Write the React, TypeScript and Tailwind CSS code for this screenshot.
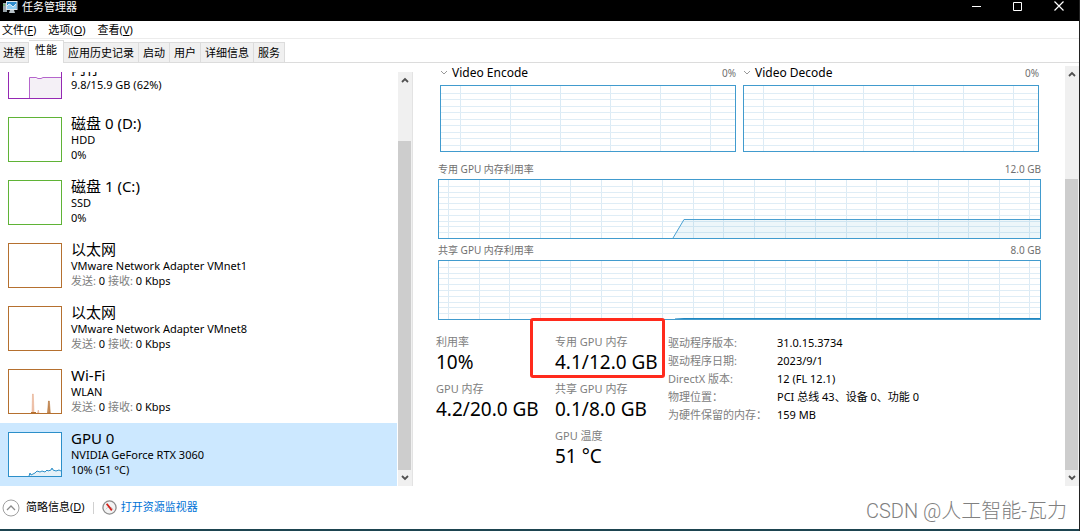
import type { ReactNode } from "react";
import clsx from "clsx";

type Device = {
  name: string;
  detail?: string;
  status: ReactNode;
  border: string;
  chart?: ReactNode;
  selected?: boolean;
};

const menus = [
  { label: "文件", key: "F" },
  { label: "选项", key: "O" },
  { label: "查看", key: "V" },
];

const tabs = ["应用历史记录", "启动", "用户", "详细信息", "服务"];

const idle = (
  <>
    <span className="text-[#808080]">发送:</span> 0 <span className="text-[#808080]">接收:</span> 0 Kbps
  </>
);

const devices: Device[] = [
  {
    name: "内存",
    status: "9.8/15.9 GB (62%)",
    border: "border-[#9528b4]",
    chart: (
      <>
        <path d="M20 43V23h5l2 1h3l2-1h20v20z" fill="#f4f0f6" />
        <path d="M20.500 43V22.500H27l2 1h3l2-1h18" fill="none" stroke="#b565cc" />
      </>
    ),
  },
  { name: "磁盘 0 (D:)", detail: "HDD", status: "0%", border: "border-[#5fb336]" },
  { name: "磁盘 1 (C:)", detail: "SSD", status: "0%", border: "border-[#5fb336]" },
  { name: "以太网", detail: "VMware Network Adapter VMnet1", status: idle, border: "border-[#b5702f]" },
  { name: "以太网", detail: "VMware Network Adapter VMnet8", status: idle, border: "border-[#b5702f]" },
  {
    name: "Wi-Fi",
    detail: "WLAN",
    status: idle,
    border: "border-[#b5702f]",
    chart: (
      <>
        <path d="M23 43l.5-19h.8l.7 19zM28.500 43l.8-3 .7 3z" fill="#f0c4ac" stroke="#e3a583" strokeWidth="0.5" />
        <path d="M38.500 43l1-12h.8l1 12z" fill="#c98f5d" stroke="#a8601f" strokeWidth="0.5" />
        <path d="M22 42.500h5" stroke="#b5702f" />
      </>
    ),
  },
  {
    name: "GPU 0",
    detail: "NVIDIA GeForce RTX 3060",
    status: "10% (51 °C)",
    border: "border-[#2c8fc9]",
    selected: true,
    chart: (
      <>
        <path d="M20 43l1-3 1 2 2-1 2-1 2-2 3 1 2-1 3 1 2-2 1 1 3-1 1-2 1 2 3 1 3-1 2 1v5z" fill="#e5f1f8" />
        <path d="M20 43l1-3 1 2 2-1 2-1 2-2 3 1 2-1 3 1 2-2 1 1 3-1 1-2 1 2 3 1 3-1 2 1" fill="none" stroke="#2c8fc9" />
      </>
    ),
  },
];

const driverInfo = [
  ["驱动程序版本:", "31.0.15.3734"],
  ["驱动程序日期:", "2023/9/1"],
  ["DirectX 版本:", "12 (FL 12.1)"],
  ["物理位置：", "PCI 总线 43、设备 0、功能 0"],
  ["为硬件保留的内存：", "159 MB"],
];

function AppIcon() {
  return (
    <svg viewBox="0 0 16 14" className="h-3.5 w-4" aria-hidden="true">
      <rect x="1" y="3" width="4" height="9" fill="#9aa5ab" />
      <rect x="1.500" y="4" width="1" height="2" fill="#4dc247" />
      <rect x="4" y="1" width="11.500" height="9" fill="#dfe6ea" />
      <rect x="5" y="2" width="9.500" height="7" fill="#2f8ccc" />
      <path d="M5 6l2-2 2 1 2 2 3-3v5H5z" fill="#8fcdf2" />
      <path d="M5 6l2-2 2 1 2 2 3-3" fill="none" stroke="#fff" strokeWidth="0.8" />
      <path d="M8 10h4l1 3H7z" fill="#b9c3c9" />
    </svg>
  );
}

function ScrollArrow({ up = false }: { up?: boolean }) {
  return (
    <button aria-label={up ? "向上滚动" : "向下滚动"} className="flex h-4 shrink-0 items-center justify-center bg-[#f0f0f0]">
      <svg viewBox="0 0 8 6" className="h-1.5 w-2">
        <path d={up ? "M1 5l3-3 3 3" : "M1 1l3 3 3-3"} fill="none" stroke="#505050" strokeWidth="1.800" />
      </svg>
    </button>
  );
}

function ScrollBar({ thumb }: { thumb: string }) {
  return (
    <div className="flex w-3.5 shrink-0 flex-col bg-[#f0f0f0]">
      <ScrollArrow up />
      <div className="flex flex-1 flex-col justify-end">
        <div className={clsx("mr-px bg-[#cdcdcd]", thumb)} />
      </div>
      <ScrollArrow />
    </div>
  );
}

function DeviceRow({ device }: { device: Device }) {
  return (
    <button
      className={clsx(
        "flex h-[63px] w-full shrink-0 gap-[9px] pl-2 text-left",
        device.selected && "bg-[#cce8ff]"
      )}
    >
      <span className={clsx("mt-[9px] h-[45px] w-[54px] shrink-0 border bg-white", device.border)}>
        <svg viewBox="0 0 52 43" className="h-full w-full">
          {device.chart}
        </svg>
      </span>
      <span className="flex h-[60px] flex-col justify-center text-[11px] leading-[15px]">
        <span className="text-[15px] leading-[18px]">{device.name}</span>
        {device.detail && <span>{device.detail}</span>}
        <span>{device.status}</span>
      </span>
    </button>
  );
}

type GraphProps = {
  width: number;
  height: number;
  step: number;
  start: number;
  className: string;
  children?: ReactNode;
};

function Graph({ width, height, step, start, className, children }: GraphProps) {
  const columns = Array.from({ length: Math.ceil((width - start) / step) }, (_, i) => Math.round(start + i * step));
  const rows = Array.from({ length: 9 }, (_, i) => Math.round(((i + 1) * height) / 10));
  return (
    <div className={clsx("border border-[#419bce]", className)}>
      <svg viewBox={`0 0 ${width} ${height}`} preserveAspectRatio="none" className="block h-full w-full">
        {columns.map((x) => (
          <path key={x} d={`M${x + 0.5} 0V${height}`} stroke="#dcebf5" />
        ))}
        {rows.map((y) => (
          <path key={y} d={`M0 ${y + 0.5}H${width}`} stroke="#dfedf6" />
        ))}
        {children}
      </svg>
    </div>
  );
}

function Engine({ name }: { name: string }) {
  return (
    <div>
      <div className="mb-1 flex items-center justify-between leading-4">
        <button className="flex items-center gap-1 text-xs leading-4">
          <svg viewBox="0 0 8 6" className="h-1.5 w-2">
            <path d="M1 1l3 3 3-3" fill="none" stroke="#999" />
          </svg>
          {name}
        </button>
        <span className="text-[10px] text-[#707070]">0%</span>
      </div>
      <Graph width={294} height={65} step={50} start={19} className="h-[67px]" />
    </div>
  );
}

function GraphLabel({ title, max }: { title: string; max: string }) {
  return (
    <div className="mb-0.5 flex justify-between text-[10px] leading-4 text-[#707070]">
      <span>{title}</span>
      <span>{max}</span>
    </div>
  );
}

function Stat({ label, value, marked = false }: { label: string; value: string; marked?: boolean }) {
  return (
    <div className="relative whitespace-nowrap">
      <div className="text-[11px] leading-4 text-[#808080]">{label}</div>
      <div className="text-[19px] leading-6">{value}</div>
      {marked && (
        <div className="absolute -left-[25px] -top-4 h-[60px] w-[135px] rounded-[3px] border-[3px] border-[#ff2a1c]" />
      )}
    </div>
  );
}

export default function App() {
  return (
    <div className="relative flex h-screen flex-col overflow-hidden border-r border-[#222] bg-white font-['Noto_Sans','Noto_Sans_CJK_SC',sans-serif] text-[11px] text-black">
      <header className="flex h-[21px] shrink-0 items-start justify-between bg-black text-white">
        <div className="flex items-center gap-1 pl-0.5">
          <AppIcon />
          <h1 className="leading-[14px]">任务管理器</h1>
        </div>
        <div className="flex gap-[31px] pr-[15px] pt-px">
          <button aria-label="最小化">
            <svg viewBox="0 0 10 10" className="size-2.5">
              <path d="M0 5.500h9" stroke="#fff" />
            </svg>
          </button>
          <button aria-label="最大化">
            <svg viewBox="0 0 10 10" className="size-2.5">
              <path d="M.5 1.500h8v8h-8z" fill="none" stroke="#fff" />
            </svg>
          </button>
          <button aria-label="关闭">
            <svg viewBox="0 0 10 10" className="size-2.5">
              <path d="M.5 .5l9 9M9.500 .5l-9 9" stroke="#fff" strokeWidth="1.200" />
            </svg>
          </button>
        </div>
      </header>

      <nav className="flex h-[18px] shrink-0 gap-3 border-b border-[#ececec] pl-0.5 leading-4">
        {menus.map((menu) => (
          <button key={menu.key}>
            {menu.label}(<span className="underline">{menu.key}</span>)
          </button>
        ))}
      </nav>

      <div role="tablist" className="flex h-6 shrink-0 items-end border-b border-[#dcdcdc] leading-4">
        <button role="tab" className="h-5 border-r border-t border-[#dcdcdc] bg-[#f0f0f0] px-[3px]">
          进程
        </button>
        <button role="tab" aria-selected="true" className="-mb-px h-[23px] border-r border-t border-[#dcdcdc] bg-white px-1.5 pb-1">
          性能
        </button>
        {tabs.map((tab) => (
          <button key={tab} role="tab" className="h-5 border-r border-t border-[#dcdcdc] bg-[#f0f0f0] px-1">
            {tab}
          </button>
        ))}
      </div>

      <main className="flex min-h-0 flex-1">
        <aside className="mt-[9px] flex w-[413px] shrink-0 border-r border-[#e3e3e3]">
          <div className="mr-px flex flex-1 flex-col justify-end overflow-hidden">
            {devices.map((device, i) => (
              <DeviceRow key={i} device={device} />
            ))}
          </div>
          <ScrollBar thumb="h-[86%]" />
        </aside>

        <section className="min-w-0 flex-1 pl-[23px] pr-6 pt-0.5">
          <div className="mb-[9px] grid grid-cols-2 gap-[7px] pl-1 pr-0.5">
            <Engine name="Video Encode" />
            <Engine name="Video Decode" />
          </div>

          <div className="pl-0.5">
            <GraphLabel title="专用 GPU 内存利用率" max="12.0 GB" />
            <Graph width={601} height={58} step={30.6} start={9} className="mb-[3px] h-[60px]">
              <path d="M234 58l11-19h356v19z" fill="#1f86c0" fillOpacity="0.080" />
              <path d="M234 58l11-18.500h356" fill="none" stroke="#4ba0d1" />
            </Graph>
            <GraphLabel title="共享 GPU 内存利用率" max="8.0 GB" />
            <Graph width={601} height={58} step={30.6} start={9} className="h-[60px]">
              <path d="M236 58l9-.5h356" fill="none" stroke="#1f86c0" />
            </Graph>
          </div>

          <div className="grid grid-cols-[119px_113px_1fr] pt-3.5">
            <div className="flex flex-col gap-[7px]">
              <Stat label="利用率" value="10%" />
              <Stat label="GPU 内存" value="4.2/20.0 GB" />
            </div>
            <div className="flex flex-col gap-[7px]">
              <Stat label="专用 GPU 内存" value="4.1/12.0 GB" marked />
              <Stat label="共享 GPU 内存" value="0.1/8.0 GB" />
              <Stat label="GPU 温度" value="51 °C" />
            </div>
            <dl className="grid grid-cols-[109px_1fr] content-start leading-[18px]">
              {driverInfo.map(([label, value]) => (
                <div key={label} className="contents">
                  <dt className="whitespace-nowrap text-[#808080]">{label}</dt>
                  <dd>{value}</dd>
                </div>
              ))}
            </dl>
          </div>
        </section>

        <div className="flex pt-[3px]">
          <ScrollBar thumb="h-[75%]" />
        </div>
      </main>

      <footer className="flex h-[45px] shrink-0 items-center border-b-2 border-[#1d4450] pl-0.5">
        <button className="flex items-center gap-1.5">
          <svg viewBox="0 0 18 18" className="size-[18px]">
            <circle cx="9" cy="9" r="8" fill="none" stroke="#a0a0a0" />
            <path d="M5 11l4-4 4 4" fill="none" stroke="#8a8a8a" strokeWidth="1.300" />
          </svg>
          <span>
            简略信息(<span className="underline">D</span>)
          </span>
        </button>
        <span className="mx-2 h-3 w-px bg-[#d0d0d0]" />
        <a href="#resmon" className="flex items-center gap-1 text-[#0072d6]">
          <svg viewBox="0 0 16 16" className="size-[15px]">
            <circle cx="8" cy="8" r="7" fill="#f3f3f3" stroke="#8d8d8d" strokeWidth="1.400" />
            <path d="M4 10a4.500 4.500 0 0 1 8 0" fill="none" stroke="#c9c9c9" />
            <path d="M5 4l5.500 7" stroke="#d3231c" strokeWidth="2" />
          </svg>
          打开资源监视器
        </a>
      </footer>

      <div className="absolute bottom-1.5 right-3 font-[Roboto,'Noto_Sans_CJK_SC',sans-serif] text-xl font-light leading-7 text-[#808080]">
        CSDN @人工智能-瓦力
      </div>
    </div>
  );
}
